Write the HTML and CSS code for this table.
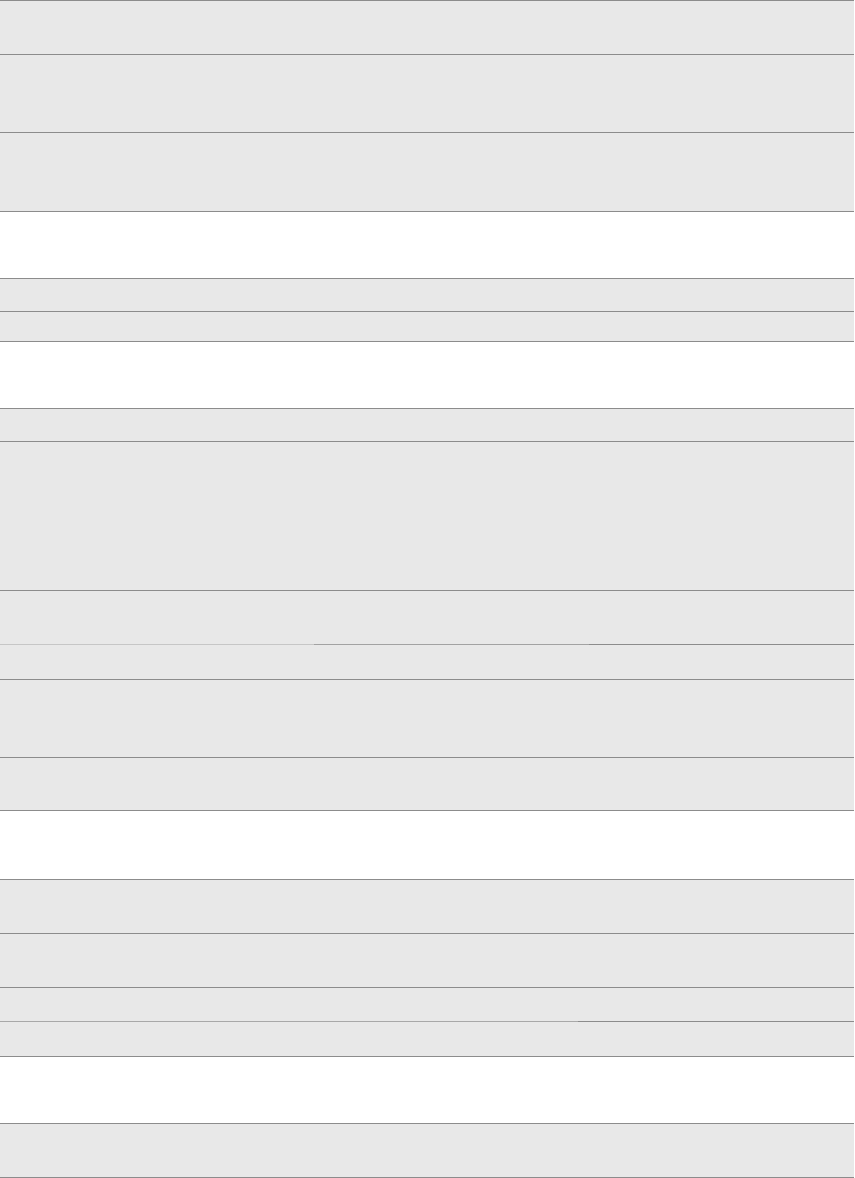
FILE: index.html
```html
<!DOCTYPE html>
<html lang="en">
<head>
    <meta charset="UTF-8">
    <meta name="viewport" content="width=device-width, initial-scale=1.0">
    <title>Settings</title>
    <link rel="stylesheet" href="styles.css">
</head>
<body>
    <div class="page">
        <!-- Grupo 1 -->
        <section class="group">
            <div class="row h54"></div>
            <div class="row h78"></div>
            <div class="row h79"></div>
        </section>

        <!-- Grupo 2 -->
        <section class="group">
            <div class="row h33"></div>
            <div class="row h30"></div>
        </section>

        <!-- Grupo 3 -->
        <section class="group">
            <div class="row h33"></div>
            <div class="row h149"></div>
            <div class="row h54"></div>
            <div class="row h35 split">
                <div class="cell cell-a"></div>
                <div class="cell cell-b"></div>
                <div class="cell cell-c"></div>
            </div>
            <div class="row h78"></div>
            <div class="row h53"></div>
        </section>

        <!-- Grupo 4 -->
        <section class="group group-wide">
            <div class="row h54"></div>
            <div class="row h54"></div>
            <div class="row h34"></div>
            <div class="row h35 split">
                <div class="cell cell-left"></div>
                <div class="cell cell-right"></div>
            </div>
        </section>

        <!-- Grupo 5 -->
        <section class="group">
            <div class="row h54"></div>
        </section>
    </div>
</body>
</html>
```

FILE: styles.css
```css
body {
    margin: 0;
    padding: 0;
    background-color: #ffffff;
    font-family: 'Roboto', sans-serif;
}
.page {
    width: 854px;
}
.group {
    background-color: #e8e8e8;
    border-bottom: 1px solid #8c8c8c;
    margin-top: 66px;
}
.group:first-child {
    margin-top: 0;
}
.group-wide {
    margin-top: 68px;
}
.row {
    box-sizing: border-box;
    border-top: 1px solid #8c8c8c;
}
.row.split {
    display: flex;
    border-top: none;
}
.cell {
    box-sizing: border-box;
    height: 100%;
    border-top: 1px solid #8c8c8c;
}
.cell-a {
    width: 314px;
    border-top-color: #c6c6c6;
}
.cell-b {
    width: 275px;
    border-top-color: #a2a2a2;
}
.cell-c {
    flex: 1;
}
.cell-left {
    width: 578px;
    border-top-color: #a8a8a8;
}
.cell-right {
    flex: 1;
}
.h30 { height: 30px; }
.h33 { height: 33px; }
.h34 { height: 34px; }
.h35 { height: 35px; }
.h53 { height: 53px; }
.h54 { height: 54px; }
.h78 { height: 78px; }
.h79 { height: 79px; }
.h149 { height: 149px; }
```
